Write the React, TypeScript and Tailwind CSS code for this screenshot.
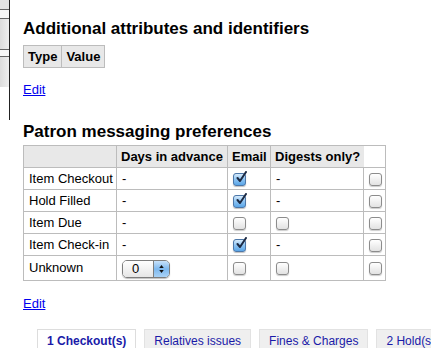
import React from "react";

type Pref = { label: string; days: "dash" | "select"; email: boolean; digest: "dash" | "box" };

const prefs: Pref[] = [
  { label: "Item Checkout", days: "dash", email: true, digest: "dash" },
  { label: "Hold Filled", days: "dash", email: true, digest: "dash" },
  { label: "Item Due", days: "dash", email: false, digest: "box" },
  { label: "Item Check-in", days: "dash", email: true, digest: "dash" },
  { label: "Unknown", days: "select", email: false, digest: "box" },
];

function Box({ checked = false }: { checked?: boolean }) {
  if (checked) {
    return (
      <span className="relative inline-block h-[13px] w-[13px] rounded-[3px] border border-[#4d77a8] bg-gradient-to-b from-[#d6ebfc] via-[#8cc3f2] to-[#5aa6e8] align-middle shadow-[0_1px_1px_rgba(0,0,0,0.25)]">
        <svg viewBox="0 0 13 13" className="absolute -top-[3px] left-[1px] h-[13px] w-[13px]">
          <path d="M2.5 7 L5 10 L11 1" fill="none" stroke="#1c2a44" strokeWidth="2" strokeLinecap="round" strokeLinejoin="round" />
        </svg>
      </span>
    );
  }
  return (
    <span className="inline-block h-[13px] w-[13px] rounded-[3px] border border-[#8c8c8c] bg-gradient-to-b from-white to-[#e2e2e2] align-middle shadow-[0_1px_1px_rgba(0,0,0,0.2)]" />
  );
}

function AquaSelect() {
  return (
    <span className="inline-flex h-[18px] w-[48px] items-stretch overflow-hidden rounded-[5px] border border-[#7d7d7d] align-middle shadow-[0_1px_1px_rgba(0,0,0,0.25)]">
      <span className="flex flex-1 items-center bg-gradient-to-b from-white to-[#e6e6e6] pl-[9px] text-[13px] leading-none">0</span>
      <span className="flex w-[16px] flex-col items-center justify-center gap-[2px] border-l border-[#7d7d7d] bg-gradient-to-b from-[#c8e2fa] via-[#7db8ee] to-[#a9d2f6]">
        <svg viewBox="0 0 6 4" className="h-[3px] w-[5px]"><path d="M0 4 L3 0 L6 4 Z" fill="#111" /></svg>
        <svg viewBox="0 0 6 4" className="h-[3px] w-[5px]"><path d="M0 0 L3 4 L6 0 Z" fill="#111" /></svg>
      </span>
    </span>
  );
}

export default function App() {
  const cell = "border border-[#bcbcbc] px-[5px] h-[22px] text-left align-middle";
  const th = "border border-[#bcbcbc] bg-[#e8e8e8] px-[4px] h-[22px] text-left font-bold align-middle whitespace-nowrap";
  const tab = "border px-[9px] pt-[4px] pb-[8px] text-[12px] leading-[15px] text-[#1a1aa8]";

  return (
    <div className="flex h-[348px] w-[431px] overflow-hidden bg-white text-[13px] text-black [font-family:'Liberation_Sans',Arial,sans-serif]">
      {/* sidebar edge */}
      <div className="flex h-[120px] w-[10px] shrink-0 flex-col border-r border-[#222]">
        <div className="h-[10px] border-b border-[#666] bg-[#e4e4e4]" />
        <div className="h-[9px] border-b border-[#666] bg-[#f7f7f7]" />
        <div className="h-[31px] border-b border-[#666] bg-gradient-to-r from-[#dcdcdc] to-[#efefef]" />
        <div className="h-[7px] border-b border-[#666] bg-[#f7f7f7]" />
        <div className="h-[30px] bg-gradient-to-r from-[#dcdcdc] to-[#efefef]" />
      </div>

      <div className="flex flex-col pl-[13px]">
        <h2 className="mt-[19px] text-[17px] leading-[20px] font-bold">Additional attributes and identifiers</h2>
        <table className="mt-[6px] w-[82px] border-collapse">
          <thead>
            <tr>
              <th className={th}>Type</th>
              <th className={th}>Value</th>
            </tr>
          </thead>
        </table>
        <a href="#" className="mt-[14px] leading-[16px] text-[#0000ee] underline self-start">Edit</a>

        <h2 className="mt-[24px] text-[17px] leading-[20px] font-bold">Patron messaging preferences</h2>
        <table className="mt-[3px] w-[362px] table-fixed border-collapse border border-[#bcbcbc]">
          <colgroup>
            <col className="w-[93px]" />
            <col className="w-[111px]" />
            <col className="w-[43px]" />
            <col className="w-[93px]" />
            <col className="w-[22px]" />
          </colgroup>
          <thead>
            <tr>
              <th className={th}></th>
              <th className={th}>Days in advance</th>
              <th className={th}>Email</th>
              <th className={`${th} border-r-0`}>Digests only?</th>
            </tr>
          </thead>
          <tbody>
            {prefs.map((p) => (
              <tr key={p.label}>
                <td className={`${cell} whitespace-nowrap ${p.days === "select" ? "h-[25px]" : ""}`}>{p.label}</td>
                <td className={cell}>{p.days === "select" ? <AquaSelect /> : "-"}</td>
                <td className={cell}><Box checked={p.email} /></td>
                <td className={cell}>{p.digest === "box" ? <Box /> : "-"}</td>
                <td className={`${cell} pl-[5px] pr-0`}><Box /></td>
              </tr>
            ))}
          </tbody>
        </table>
        <a href="#" className="mt-[15px] leading-[16px] text-[#0000ee] underline self-start">Edit</a>

        <div className="mt-[17px] ml-[14px] flex gap-[8px] whitespace-nowrap">
          <span className={`${tab} border-[#dddddd] bg-white font-bold`}>1 Checkout(s)</span>
          <span className={`${tab} border-[#e2e2e2] bg-[#efefef]`}>Relatives issues</span>
          <span className={`${tab} border-[#e2e2e2] bg-[#efefef]`}>Fines &amp; Charges</span>
          <span className={`${tab} border-[#e2e2e2] bg-[#efefef]`}>2 Hold(s)</span>
        </div>
      </div>
    </div>
  );
}
